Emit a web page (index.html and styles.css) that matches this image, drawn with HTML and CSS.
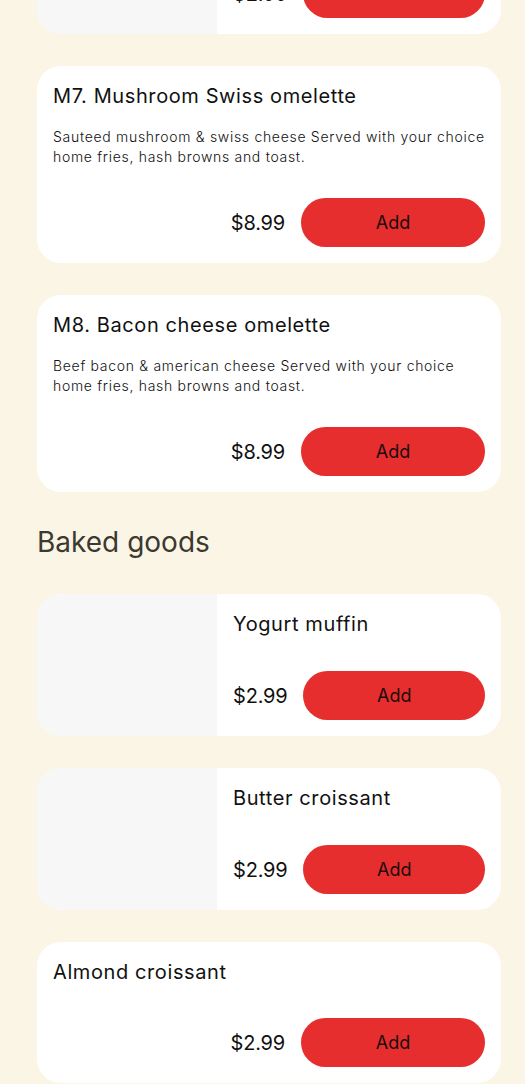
FILE: index.html
```html
<!DOCTYPE html>
<html>
<head>
  <link rel="stylesheet" href="styles.css">
</head>
<body>
  <main class="menu">
    <div class="card card-photo">
      <div class="photo"></div>
      <div class="info">
        <h3 class="name">Blueberry muffin</h3>
        <div class="order">
          <span class="price">$2.99</span>
          <button class="add">Add</button>
        </div>
      </div>
    </div>

    <div class="card">
      <div class="info">
        <h3 class="name">M7. Mushroom Swiss omelette</h3>
        <p class="desc">Sauteed mushroom &amp; swiss cheese Served with your choice home fries, hash browns and toast.</p>
        <div class="order">
          <span class="price">$8.99</span>
          <button class="add">Add</button>
        </div>
      </div>
    </div>

    <div class="card">
      <div class="info">
        <h3 class="name">M8. Bacon cheese omelette</h3>
        <p class="desc">Beef bacon &amp; american cheese Served with your choice home fries, hash browns and toast.</p>
        <div class="order">
          <span class="price">$8.99</span>
          <button class="add">Add</button>
        </div>
      </div>
    </div>

    <h2 class="section">Baked goods</h2>

    <div class="card card-photo">
      <div class="photo"></div>
      <div class="info">
        <h3 class="name">Yogurt muffin</h3>
        <div class="order">
          <span class="price">$2.99</span>
          <button class="add">Add</button>
        </div>
      </div>
    </div>

    <div class="card card-photo">
      <div class="photo"></div>
      <div class="info">
        <h3 class="name">Butter croissant</h3>
        <div class="order">
          <span class="price">$2.99</span>
          <button class="add">Add</button>
        </div>
      </div>
    </div>

    <div class="card">
      <div class="info">
        <h3 class="name">Almond croissant</h3>
        <div class="order">
          <span class="price">$2.99</span>
          <button class="add">Add</button>
        </div>
      </div>
    </div>
  </main>
</body>
</html>
```

FILE: styles.css
```css
:root {
  --bg: #fbf5e6;
  --red: #e52e2d;
  --text: #111111;
  --radius: 24px;
}

body {
  margin: 0;
  background: var(--bg);
  font-family: Inter, "Noto Sans", sans-serif;
  color: var(--text);
  overflow: hidden;
}

.menu {
  display: flex;
  flex-direction: column;
  gap: 32px;
  padding: 0 24px 0 37px;
  margin-top: -108px;
}

.card {
  display: flex;
  background: white;
  border-radius: var(--radius);
  overflow: hidden;
}

.photo {
  width: 180px;
  flex-shrink: 0;
  background: #f7f7f7;
}

.info {
  flex: 1;
  min-width: 0;
  display: flex;
  flex-direction: column;
  padding: 16px;
}

.name {
  margin: 0;
  font-size: 20px;
  font-weight: 400;
  line-height: 28px;
  letter-spacing: 0.6px;
}

.desc {
  margin: 17px 0 0;
  font-size: 14px;
  font-weight: 300;
  line-height: 20px;
  letter-spacing: 0.7px;
}

.order {
  display: flex;
  align-items: center;
  justify-content: flex-end;
  gap: 16px;
  margin-top: 32px;
}

.desc + .order {
  margin-top: 31px;
}

.card-photo .order {
  justify-content: flex-start;
  margin-top: 33px;
}

.price {
  font-size: 20px;
  letter-spacing: -0.2px;
}

.add {
  width: 184px;
  min-width: 0;
  height: 49px;
  border: none;
  border-radius: 25px;
  background: var(--red);
  color: #1a0b0b;
  font-family: inherit;
  font-size: 18px;
}

.card-photo .add {
  flex: 1;
}

.section {
  margin: 0;
  padding-bottom: 2px;
  font-size: 28px;
  font-weight: 400;
  line-height: 36px;
  color: #3b3930;
}
```
